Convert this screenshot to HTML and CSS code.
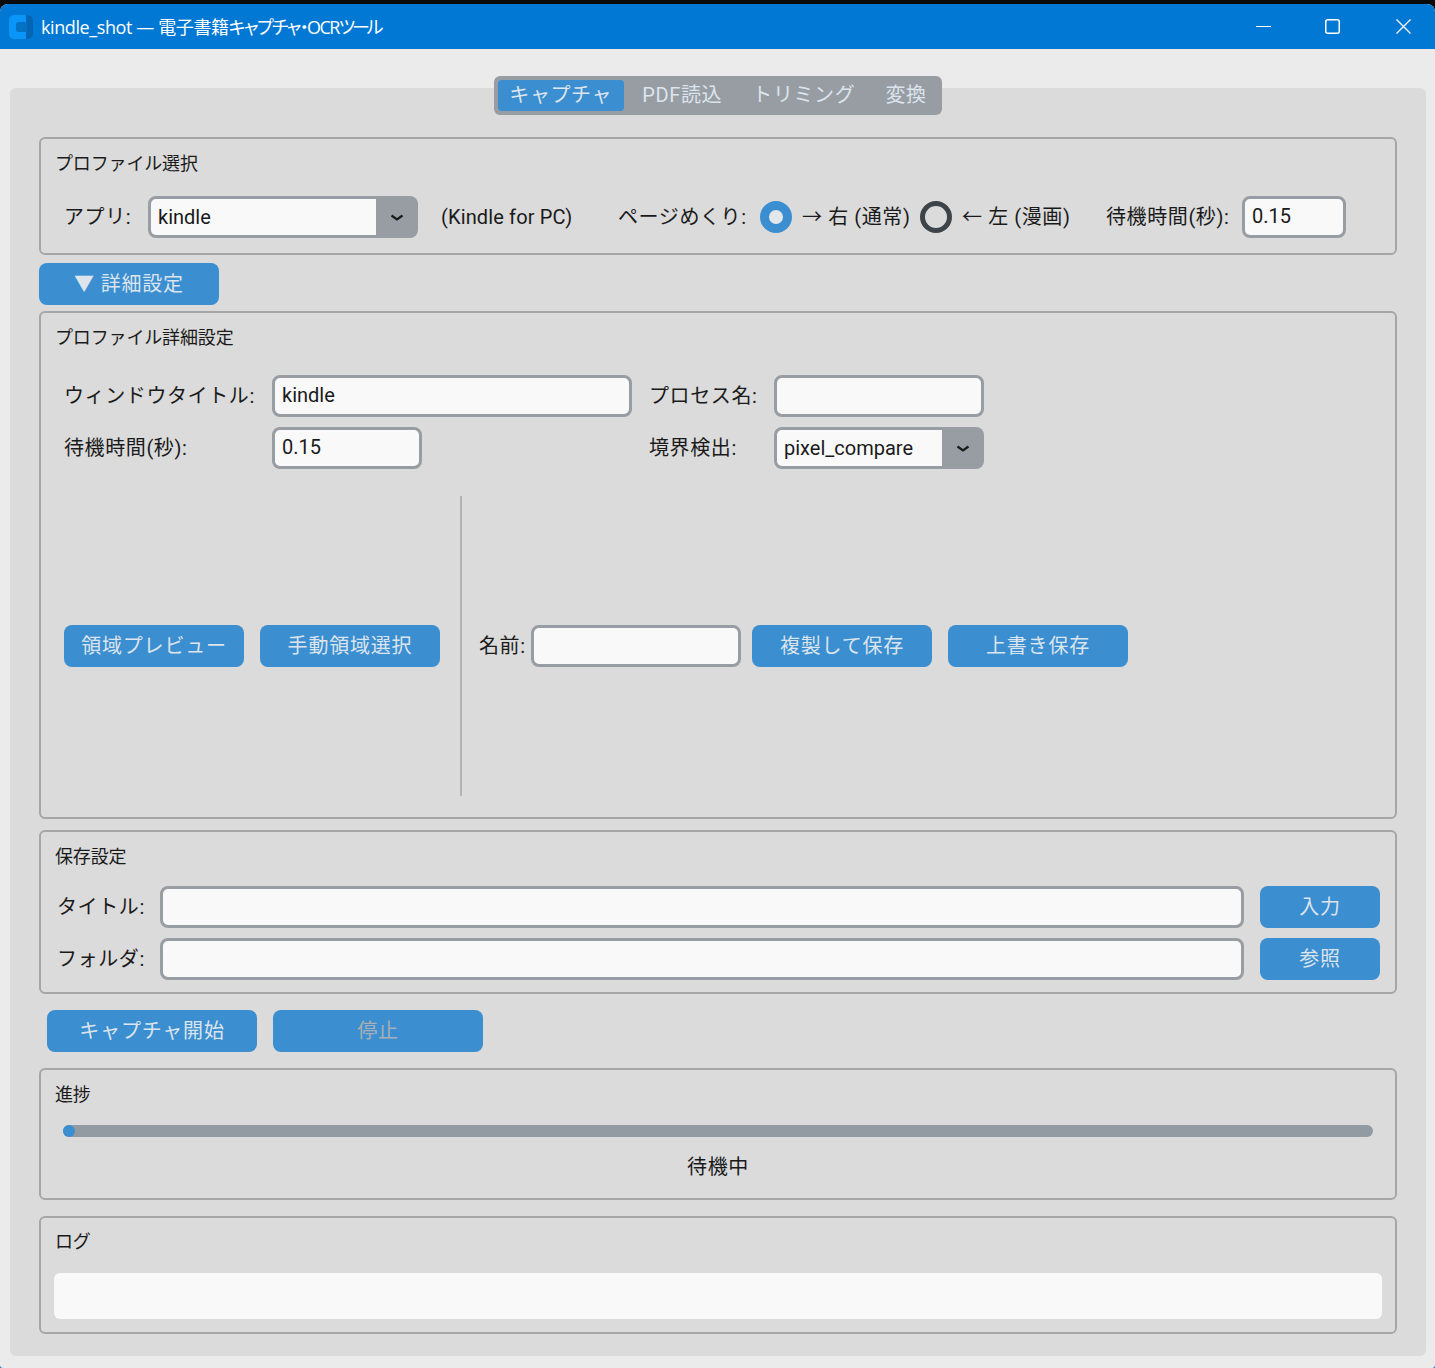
FILE: index.html
```html
<!DOCTYPE html>
<html lang="ja">
<head>
<meta charset="utf-8">
<title>kindle_shot — 電子書籍キャプチャ・OCRツール</title>
<link rel="stylesheet" href="styles.css">
</head>
<body>
<div class="window">
  <header class="titlebar">
    <svg class="logo" width="24" height="24" viewBox="0 0 24 24"><rect width="24" height="24" rx="5" fill="#0a96f8"/><path d="M17 0h2a5 5 0 0 1 5 5v14a5 5 0 0 1-5 5h-2z" fill="#0565b4"/><path d="M9.500 7H18v10H9.500a2.500 2.500 0 0 1-2.500-2.500v-5A2.500 2.500 0 0 1 9.500 7z" fill="#0672c6"/></svg>
    <span class="app-title">kindle_shot — 電子書籍<span class="title-tight">キャプチャ・OCR</span><span class="title-tighter">ツール</span></span>
    <div class="controls">
      <svg class="ctl ctl-min" width="15" height="15" viewBox="0 0 15 15"><path d="M0 7.500h15" stroke="#fff" stroke-width="1"/></svg>
      <svg class="ctl ctl-max" width="15" height="15" viewBox="0 0 15 15"><rect x=".75" y=".75" width="13.500" height="13.500" rx="2" fill="none" stroke="#fff" stroke-width="1.500"/></svg>
      <svg class="ctl ctl-close" width="15" height="15" viewBox="0 0 15 15"><path d="M.5.500l14 14M14.500.500l-14 14" stroke="#fff" stroke-width="1.300" fill="none"/></svg>
    </div>
  </header>

  <main class="tabview">
    <nav class="segments">
      <span class="seg seg-active">キャプチャ</span>
      <span class="seg">PDF読込</span>
      <span class="seg">トリミング</span>
      <span class="seg">変換</span>
    </nav>
    <div class="panel">
      <section class="group g-profile">
        <h2 class="group-title">プロファイル選択</h2>
        <div class="profile-row">
          <span class="label">アプリ:</span>
          <div class="combo"><input class="combo-input" value="kindle" readonly><span class="combo-arrow"><svg width="14" height="8" viewBox="0 0 14 8"><path d="M1.500 1.500L7 5.500l5.500-4" fill="none" stroke="#1a1a1a" stroke-width="2.200"/></svg></span></div>
          <span class="label label-latin pad-23">(Kindle for PC)</span>
          <span class="label">ページめくり:</span>
          <span class="radio radio-on"></span>
          <span class="label pad-10">→ 右 (通常)</span>
          <span class="radio radio-off"></span>
          <span class="label pad-10">← 左 (漫画)</span>
          <span class="label">待機時間(秒):</span>
          <input class="entry" value="0.15" readonly>
        </div>
      </section>

      <button class="btn btn-toggle">▼ 詳細設定</button>

      <section class="group g-detail">
        <h2 class="group-title">プロファイル詳細設定</h2>
        <div class="detail-grid">
          <span class="label">ウィンドウタイトル:</span>
          <input class="entry" value="kindle" readonly>
          <span></span>
          <span class="label">プロセス名:</span>
          <input class="entry" readonly>
          <span class="label">待機時間(秒):</span>
          <input class="entry entry-short" value="0.15" readonly>
          <span></span>
          <span class="label">境界検出:</span>
          <div class="combo"><input class="combo-input" value="pixel_compare" readonly><span class="combo-arrow"><svg width="14" height="8" viewBox="0 0 14 8"><path d="M1.500 1.500L7 5.500l5.500-4" fill="none" stroke="#1a1a1a" stroke-width="2.200"/></svg></span></div>
        </div>
        <div class="split-row">
          <button class="btn">領域プレビュー</button>
          <button class="btn">手動領域選択</button>
          <div class="separator"></div>
          <span class="label name-label">名前:</span>
          <input class="entry entry-name" readonly>
          <button class="btn">複製して保存</button>
          <button class="btn">上書き保存</button>
        </div>
      </section>

      <section class="group g-save">
        <h2 class="group-title">保存設定</h2>
        <div class="save-grid">
          <span class="label save-label">タイトル:</span>
          <input class="entry" readonly>
          <button class="btn">入力</button>
          <span class="label save-label">フォルダ:</span>
          <input class="entry" readonly>
          <button class="btn">参照</button>
        </div>
      </section>

      <div class="action-row">
        <button class="btn btn-wide">キャプチャ開始</button>
        <button class="btn btn-wide btn-disabled">停止</button>
      </div>

      <section class="group g-progress">
        <h2 class="group-title">進捗</h2>
        <div class="progress"><div class="progress-dot"></div></div>
        <div class="status">待機中</div>
      </section>

      <section class="group g-log">
        <h2 class="group-title group-title-log">ログ</h2>
        <div class="logbox"></div>
      </section>
    </div>
  </main>
</div>
</body>
</html>
```

FILE: styles.css
```css
* { box-sizing: border-box; }
html { background: linear-gradient(#0a0a0a 50%, #0078d4 50%); }
body {
  margin: 0;
  padding-top: 4px;
  height: 1368px;
  font-family: Roboto, "Noto Sans CJK JP", sans-serif;
  color: #1a1a1a;
}
.window {
  height: 1364px;
  background: #ebebeb;
  border-radius: 8px 8px 3px 3px;
  overflow: hidden;
}
.titlebar {
  height: 45px;
  background: #0078d4;
  display: flex;
  align-items: center;
  padding-left: 9px;
  color: #fff;
}
.logo { flex: none; margin-right: 8px; }
.app-title {
  font-family: "Open Sans", "Noto Sans CJK JP", sans-serif;
  font-size: 18px;
  font-feature-settings: "palt";
  letter-spacing: -0.4px;
  padding-bottom: 2px;
}
.title-tight { letter-spacing: -1.6px; }
.title-tighter { letter-spacing: -3.2px; }
.controls {
  margin-left: auto;
  display: flex;
  align-items: center;
  padding-right: 24px;
  margin-top: -1px;
}
.ctl { display: block; }
.ctl-max { margin-left: 54px; }
.ctl-close { margin-left: 56px; }

.tabview {
  display: flex;
  flex-direction: column;
  align-items: center;
  padding: 27px 9px 0 10px;
}
.segments {
  position: relative;
  z-index: 1;
  height: 39px;
  margin-bottom: -27px;
  padding: 4px;
  background: #979da2;
  border-radius: 6px;
  display: flex;
  gap: 7px;
}
.seg {
  padding: 0 11.600px;
  font-size: 20px;
  line-height: 31px;
  letter-spacing: 0.6px;
  color: #dce4ee;
  border-radius: 4px;
  white-space: nowrap;
}
.seg-active { background: #3b8ed0; }
.panel {
  align-self: stretch;
  height: 1268px;
  background: #dbdbdb;
  border-radius: 6px;
  padding: 49px 29px 0;
  display: flex;
  flex-direction: column;
}

.group {
  border: 2px solid #a6a6a6;
  border-radius: 6px;
  padding: 12px 14px 0;
}
.group-title {
  margin: 0 0 -1px;
  padding-top: 1px;
  font-size: 18px;
  font-weight: 400;
  line-height: 24px;
  letter-spacing: -0.15px;
  white-space: nowrap;
}
.group-title-log { margin-bottom: 0; padding-top: 0; }
.label {
  font-size: 20px;
  line-height: 28px;
  letter-spacing: 0.6px;
  white-space: nowrap;
}
.label-latin { letter-spacing: 0.13px; }
.entry {
  display: block;
  width: 100%;
  height: 42px;
  border: 3px solid #979da2;
  border-radius: 8px;
  background: #f9f9fa;
  padding: 0 7px 2px;
  font: 20px Roboto, sans-serif;
  color: #1a1a1a;
  outline: none;
}
.entry-short { width: 150px; }
.entry-name { width: 210px; flex: none; margin-right: -5px; }
.combo {
  height: 42px;
  display: flex;
  background: #979da2;
  border-radius: 8px;
  padding: 3px 0 3px 3px;
}
.combo-input {
  flex: 1;
  min-width: 0;
  border: 0;
  border-radius: 5px 0 0 5px;
  background: #f9f9fa;
  padding: 0 7px;
  font: 20px Roboto, sans-serif;
  color: #1a1a1a;
  outline: none;
}
.combo-arrow {
  flex: none;
  width: 42px;
  display: flex;
  align-items: center;
  justify-content: center;
  padding-top: 1px;
}
.radio {
  width: 32px;
  height: 32px;
  border-radius: 50%;
}
.radio-on { border: 9px solid #3b8ed0; background: #e4e7ea; }
.radio-off { border: 5px solid #3e454a; }
.btn {
  height: 42px;
  width: 180px;
  flex: none;
  border: 0;
  border-radius: 8px;
  background: #3b8ed0;
  color: #dce4ee;
  font: 20px Roboto, "Noto Sans CJK JP", sans-serif;
  letter-spacing: 0.8px;
  padding: 0 0 4px;
  white-space: nowrap;
}
.btn-wide { width: 210px; }
.btn-disabled { color: #a9afb5; }

.g-profile { height: 118px; }
.profile-row {
  display: grid;
  grid-template-columns: 84px 270px 200px 142px 32px 128px 32px 154px 136px 104px;
  align-items: center;
  margin: 21px 0 0 9px;
}
.pad-23 { padding-left: 23px; }
.pad-10 { padding-left: 10px; }
.btn-toggle { margin: 8px 0 6px; }

.g-detail { height: 508px; }
.detail-grid {
  display: grid;
  grid-template-columns: 208px 360px 17px 125px 210px;
  grid-auto-rows: 42px;
  row-gap: 10px;
  align-items: center;
  margin: 26px 0 0 9px;
}
.split-row {
  display: flex;
  align-items: center;
  height: 300px;
  margin: 27px 0 0 9px;
  gap: 16px;
}
.separator {
  width: 2px;
  height: 300px;
  background: #b3b3b3;
  flex: none;
  margin-left: 4px;
}
.name-label { width: 52px; flex: none; margin: 0 -16px 0 1px; }

.g-save { height: 164px; margin-top: 11px; }
.save-grid {
  display: grid;
  grid-template-columns: 105px 1084px 120px;
  grid-auto-rows: 42px;
  row-gap: 10px;
  align-items: center;
  margin-top: 18px;
}
.save-grid .entry { width: 1084px; }
.save-grid .btn { width: 120px; margin-left: 16px; }
.save-label { padding-left: 2px; }

.action-row {
  display: flex;
  gap: 16px;
  padding-left: 8px;
  margin: 16px 0;
}

.g-progress { height: 132px; }
.progress {
  height: 12px;
  margin: 19px 8px 0;
  background: #939ba2;
  border-radius: 6px;
}
.progress-dot {
  width: 12px;
  height: 12px;
  border-radius: 50%;
  background: #3b8ed0;
}
.status {
  margin-top: 16px;
  font-size: 20px;
  line-height: 28px;
  letter-spacing: 0.6px;
  text-align: center;
}
.g-log { height: 118px; margin-top: 16px; }
.logbox {
  height: 46px;
  margin: 19px -1px 0;
  background: #f9f9fa;
  border-radius: 6px;
}
```
